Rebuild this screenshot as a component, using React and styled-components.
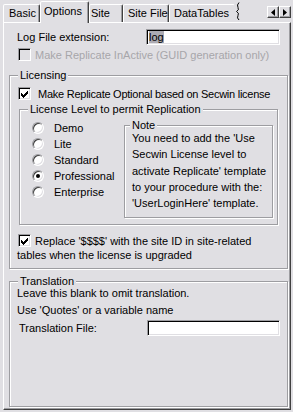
import React from 'react';
import styled, { createGlobalStyle } from 'styled-components';

const GlobalStyle = createGlobalStyle`
  * { box-sizing: border-box; }
  body {
    margin: 0;
    background: #e0dfe3;
  }
`;

const Window = styled.div`
  width: 293px;
  height: 412px;
  overflow: hidden;
  background: #e0dfe3;
  font-family: "Liberation Sans", Arial, sans-serif;
  font-size: 11px;
  color: #000;
`;

const TabStrip = styled.div`
  display: flex;
  align-items: flex-end;
  height: 22px;
  padding-left: 3px;
`;

const Tab = styled.div`
  width: ${p => p.$w}px;
  height: ${p => (p.$active ? 22 : 18)}px;
  margin-bottom: ${p => (p.$active ? -1 : 0)}px;
  padding: ${p => (p.$active ? 3 : 2)}px 0 0 ${p => p.$pad}px;
  border: 1px solid;
  border-bottom: none;
  border-color: #fff ${p => (p.$clipped ? 'transparent' : '#404040')} transparent #fff;
  box-shadow: ${p => (p.$clipped ? 'none' : 'inset -1px 0 0 #9d9da1')};
  border-radius: 2px 2px 0 0;
  background: #e0dfe3;
  position: relative;
  z-index: ${p => (p.$active ? 1 : 0)};
  line-height: 13px;
  white-space: nowrap;
  overflow: hidden;
`;

const Squiggle = styled.svg`
  flex: none;
  margin-bottom: 2px;
`;

const Spacer = styled.div`
  flex: 1;
`;

const Scroller = styled.div`
  align-self: flex-start;
  display: flex;
  margin: 6px 2px 0 0;
`;

const ScrollButton = styled.div`
  width: 12px;
  height: 12px;
  display: flex;
  align-items: center;
  justify-content: center;
  border: 1px solid;
  border-color: #fff #404040 #404040 #fff;
  box-shadow: inset -1px -1px 0 #9d9da1;
  background: #e0dfe3;
`;

const Panel = styled.div`
  margin-left: 3px;
  width: 288px;
  height: 388px;
  display: flex;
  flex-direction: column;
  padding: 0 2px 2px 5px;
  border: 1px solid;
  border-color: #fff #404040 #404040 #fff;
  box-shadow: inset -1px -1px 0 #9d9da1;
`;

const Field = styled.div`
  display: flex;
  align-items: center;
  height: 16px;
  margin: ${p => p.$top}px 0 0 ${p => p.$left}px;
`;

const FieldLabel = styled.span`
  width: ${p => p.$w}px;
  flex: none;
`;

const TextBox = styled.div`
  width: ${p => p.$w}px;
  height: 16px;
  padding: 1px 0 0 2px;
  border: 1px solid;
  border-color: #9d9da1 #fff #fff #9d9da1;
  box-shadow: inset 1px 1px 0 #000, inset -1px -1px 0 #e0dfe3;
  background: #fff;
  line-height: 12px;
`;

const Selected = styled.span`
  background: #acabb3;
`;

const CheckRow = styled.div`
  display: flex;
  align-items: center;
  height: 13px;
  gap: ${p => p.$gap}px;
  margin: ${p => p.$top}px 0 0 ${p => p.$left}px;
  color: ${p => (p.$disabled ? '#a7a6aa' : '#000')};
  letter-spacing: ${p => (p.$tight ? '-0.25px' : 'normal')};
  white-space: nowrap;
`;

const Box = styled.div`
  width: 13px;
  height: 13px;
  flex: none;
  padding: 1px;
  border: 1px solid;
  border-color: #9d9da1 #fff #fff #9d9da1;
  box-shadow: inset 1px 1px 0 #000, inset -1px -1px 0 #e0dfe3;
  background: ${p => (p.$disabled ? '#e0dfe3' : '#fff')};
`;

const Group = styled.section`
  display: flex;
  flex-direction: column;
  flex: ${p => (p.$fill ? 1 : 'none')};
  width: ${p => p.$w}px;
  height: ${p => (p.$h ? `${p.$h}px` : 'auto')};
  margin: ${p => p.$top}px 0 0 ${p => p.$left || 0}px;
  padding-bottom: ${p => p.$bottom || 0}px;
  border: 1px solid #9d9da1;
  box-shadow: inset 1px 1px 0 #fff, 1px 1px 0 #fff;
`;

const Caption = styled.div`
  align-self: flex-start;
  margin: -7px 0 0 ${p => p.$left}px;
  padding: 0 2px;
  height: 12px;
  line-height: 12px;
  background: #e0dfe3;
  white-space: nowrap;
`;

const Line = styled.div`
  margin: ${p => p.$top}px 0 0 ${p => p.$left}px;
  line-height: 13px;
  white-space: nowrap;
`;

const LevelBody = styled.div`
  display: flex;
  align-items: flex-start;
  padding-left: 12px;
`;

const RadioList = styled.div`
  width: 92px;
  margin-top: 5px;
  display: flex;
  flex-direction: column;
`;

const RadioRow = styled.div`
  display: flex;
  align-items: center;
  gap: 10px;
  height: 16px;
`;

const Radio = styled.div`
  width: 12px;
  height: 12px;
  flex: none;
  border-radius: 50%;
  border: 1px solid;
  border-color: #9d9da1 #fff #fff #9d9da1;
  box-shadow: inset 1px 1px 0 #404040, inset -1px -1px 0 #e0dfe3;
  background: #fff;
  display: flex;
  align-items: center;
  justify-content: center;
`;

const Dot = styled.div`
  width: 4px;
  height: 4px;
  border-radius: 50%;
  background: #000;
`;

const NoteText = styled.div`
  margin-top: -1px;
  padding-left: 7px;
  line-height: 16.25px;
  white-space: nowrap;
`;

const CheckMark = () => (
  <svg width="9" height="9" viewBox="0 0 9 9" shapeRendering="crispEdges">
    <path
      d="M7 1h1v1h-1z M6 2h2v1h-2z M1 3h1v1h-1z M5 3h3v1h-3z M1 4h2v1h-2z M4 4h3v1h-3z M1 5h5v1h-5z M2 6h3v1h-3z M3 7h1v1h-1z"
      fill="#000"
    />
  </svg>
);

const Check = ({ checked, disabled }) => (
  <Box $disabled={disabled}>{checked && <CheckMark />}</Box>
);

const levels = ['Demo', 'Lite', 'Standard', 'Professional', 'Enterprise'];

const tabs = [
  { label: 'Basic', w: 37, pad: 5 },
  { label: 'Options', w: 49, pad: 3, active: true },
  { label: 'Site', w: 34, pad: 1 },
  { label: 'Site File', w: 46, pad: 4 },
  { label: 'DataTables', w: 66, pad: 4, clipped: true },
];

export default function App() {
  return (
    <Window>
      <GlobalStyle />
      <TabStrip>
        {tabs.map(t => (
          <Tab key={t.label} $w={t.w} $pad={t.pad} $active={t.active} $clipped={t.clipped}>
            {t.label}
          </Tab>
        ))}
        <Squiggle width="6" height="18" viewBox="0 0 6 18">
          <path d="M4 0.5 Q1.5 3 3 5.5 Q4.5 8 1.5 9.5 Q4.5 11 3 13.5 Q1.5 16 4 18" fill="none" stroke="#000" strokeWidth="1" />
        </Squiggle>
        <Spacer />
        <Scroller>
          <ScrollButton>
            <svg width="4" height="7" viewBox="0 0 4 7"><polygon points="4,0 0,3.5 4,7" fill="#000" /></svg>
          </ScrollButton>
          <ScrollButton>
            <svg width="4" height="7" viewBox="0 0 4 7"><polygon points="0,0 4,3.5 0,7" fill="#000" /></svg>
          </ScrollButton>
        </Scroller>
      </TabStrip>

      <Panel>
        <Field $top={6} $left={8}>
          <FieldLabel $w={129}>Log File extension:</FieldLabel>
          <TextBox $w={134}><Selected>log</Selected></TextBox>
        </Field>
        <CheckRow $top={3} $left={9} $gap={4} $disabled>
          <Check disabled />
          Make Replicate InActive (GUID generation only)
        </CheckRow>

        <Group $top={14} $w={279} $bottom={6}>
          <Caption $left={8}>Licensing</Caption>
          <CheckRow $top={6} $left={8} $gap={7} $tight>
            <Check checked />
            Make Replicate Optional based on Secwin license
          </CheckRow>

          <Group $top={9} $left={9} $w={259} $bottom={6}>
            <Caption $left={8}>License Level to permit Replication</Caption>
            <LevelBody>
              <RadioList>
                {levels.map(l => (
                  <RadioRow key={l}>
                    <Radio>{l === 'Professional' && <Dot />}</Radio>
                    {l}
                  </RadioRow>
                ))}
              </RadioList>
              <Group $top={10} $w={149} $h={93}>
                <Caption $left={5}>Note</Caption>
                <NoteText>
                  You need to add the 'Use<br />
                  Secwin License level to<br />
                  activate Replicate' template<br />
                  to your procedure with the:<br />
                  'UserLoginHere' template.
                </NoteText>
              </Group>
            </LevelBody>
          </Group>

          <CheckRow $top={9} $left={8} $gap={4}>
            <Check checked />
            Replace '$$$$' with the site ID in site-related
          </CheckRow>
          <Line $top={2} $left={7}>tables when the license is upgraded</Line>
        </Group>

        <Group $top={12} $w={279} $fill>
          <Caption $left={8}>Translation</Caption>
          <Line $top={0} $left={7}>Leave this blank to omit translation.</Line>
          <Line $top={4} $left={7}>Use 'Quotes' or a variable name</Line>
          <Field $top={3} $left={9}>
            <FieldLabel $w={128}>Translation File:</FieldLabel>
            <TextBox $w={133} />
          </Field>
        </Group>
      </Panel>
    </Window>
  );
}
